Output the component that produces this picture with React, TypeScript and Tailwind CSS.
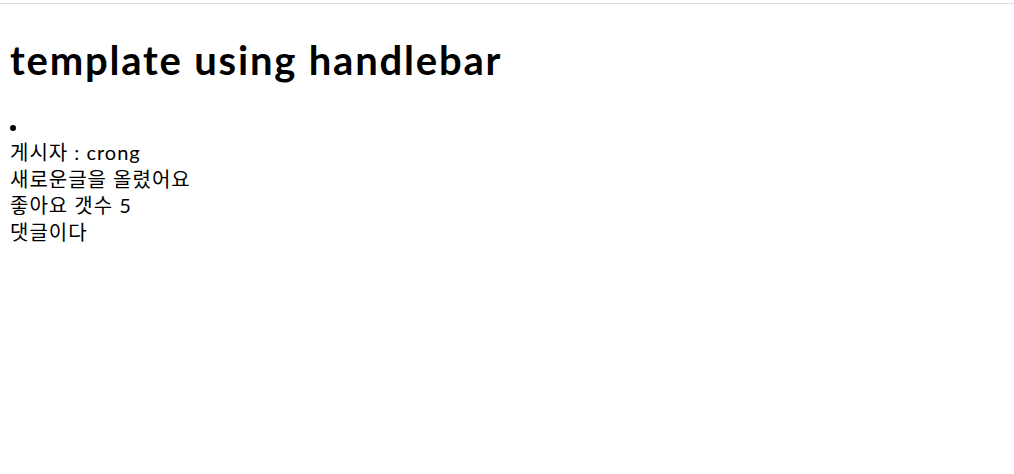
export default function App() {
  const post = {
    writer: "crong",
    body: "새로운글을 올렸어요",
    likes: 5,
    comment: "댓글이다",
  };

  return (
    <div className="min-h-screen bg-white text-black font-['Lato','Noto_Sans_CJK_KR',sans-serif]">
      <div className="h-[4px] border-b border-[#dddddd]" />

      <div className="px-[10px]">
        <h1 className="mt-[29px] text-[40px] leading-[54px] font-bold tracking-[1.8px]">
          template using handlebar
        </h1>

        <ul className="mt-[24px] text-[20px] leading-[26.5px] tracking-[1px]">
          <li>
            <div className="h-[28px] pt-[14px]">
              <div className="h-[6px] w-[6px] rounded-full bg-black" />
            </div>
            <div>게시자 : {post.writer}</div>
            <div>{post.body}</div>
            <div>좋아요 갯수 {post.likes}</div>
            <div>{post.comment}</div>
          </li>
        </ul>
      </div>
    </div>
  );
}
